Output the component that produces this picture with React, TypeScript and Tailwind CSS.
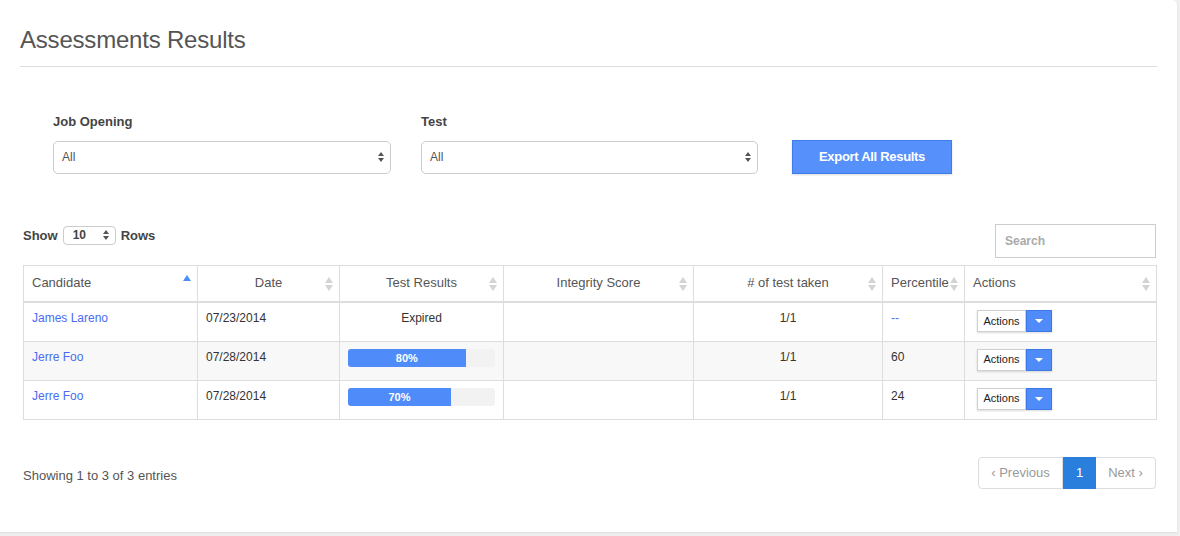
import React from "react";

type Row = {
	name: string;
	date: string;
	result: number | null;
	taken: string;
	percentile: string;
};

const rows: Row[] = [
	{ name: "James Lareno", date: "07/23/2014", result: null, taken: "1/1", percentile: "--" },
	{ name: "Jerre Foo", date: "07/28/2014", result: 80, taken: "1/1", percentile: "60" },
	{ name: "Jerre Foo", date: "07/28/2014", result: 70, taken: "1/1", percentile: "24" },
];

function SortIcon({ active }: { active?: boolean }) {
	if (active) {
		return (
			<svg width="8" height="14" viewBox="0 0 8 14" className="absolute right-[6px] top-[9px]">
				<path d="M4 0 L8 6 L0 6 Z" fill="#4b8ef8" />
			</svg>
		);
	}
	return (
		<svg width="8" height="14" viewBox="0 0 8 14" className="absolute right-[6px] top-[11px]">
			<path d="M4 0 L8 6 L0 6 Z" fill="#d4d4d4" />
			<path d="M0 8 L8 8 L4 14 Z" fill="#d4d4d4" />
		</svg>
	);
}

function UpDown() {
	return (
		<svg width="6" height="10" viewBox="0 0 6 10" className="shrink-0">
			<path d="M3 0 L6 4 L0 4 Z" fill="#555" />
			<path d="M0 6 L6 6 L3 10 Z" fill="#555" />
		</svg>
	);
}

function Select({ width }: { width: string }) {
	return (
		<div
			className={`${width} h-[33px] border border-[#cccccc] rounded-[5px] bg-white flex items-center justify-between pl-[8px] pr-[6px] text-[12px] text-[#555]`}
		>
			<span>All</span>
			<UpDown />
		</div>
	);
}

function Progress({ value }: { value: number }) {
	return (
		<div className="w-[147px] h-[18px] bg-[#f2f2f2] rounded-[3px] overflow-hidden">
			<div
				className="h-full bg-[#4f8cf9] text-white text-[11px] font-bold leading-[18px] text-center"
				style={{ width: `${value}%` }}
			>
				{value}%
			</div>
		</div>
	);
}

function ActionsButton() {
	return (
		<div className="inline-flex h-[22px] shadow-[0_1px_2px_rgba(0,0,0,0.15)]">
			<div className="w-[49px] border border-[#cfcfcf] bg-white text-[11px] text-[#222] flex items-center justify-center">
				Actions
			</div>
			<div className="w-[26px] bg-[#4f8cf9] border border-[#3d78e6] flex items-center justify-center">
				<svg width="8" height="4" viewBox="0 0 8 4">
					<path d="M0 0 L8 0 L4 4 Z" fill="#fff" />
				</svg>
			</div>
		</div>
	);
}

export default function App() {
	const th = "relative border border-[#dddddd] border-b-2 h-[37px] px-[8px] pb-[1px] font-normal text-[13px] text-[#555]";
	const td = "border border-[#dddddd] align-top px-[8px] pt-[7px] text-[12px] leading-[17px] text-[#333]";

	return (
		<div
			className="w-[1180px] h-[536px] bg-[#efefef] overflow-hidden"
			style={{ fontFamily: '"Liberation Sans", Arial, sans-serif' }}
		>
			<div className="w-[1177px] h-[532px] bg-white rounded-tr-[5px] shadow-[0_1px_2px_rgba(0,0,0,0.08)] px-[20px] pt-[27px]">
				<h1 className="text-[24px] leading-[26px] text-[#555] font-light tracking-[-0.2px]">Assessments Results</h1>
				<div className="mt-[13px] h-px bg-[#dddddd]" />

				{/* filters */}
				<div className="flex items-end pl-[33px] mt-[45px]">
					<div className="flex flex-col">
						<label className="text-[13px] font-bold text-[#444] mb-[9px]">Job Opening</label>
						<Select width="w-[338px]" />
					</div>
					<div className="flex flex-col ml-[30px]">
						<label className="text-[13px] font-bold text-[#444] mb-[9px]">Test</label>
						<Select width="w-[337px]" />
					</div>
					<button className="ml-[34px] w-[160px] h-[34px] bg-[#5590fb] border border-[#3f7ce8] text-white text-[13px] font-bold tracking-[-0.3px] shadow-[0_1px_2px_rgba(0,0,0,0.15)]">
						Export All Results
					</button>
				</div>

				{/* show rows / search */}
				<div className="flex items-start justify-between pl-[3px] pr-[1px] mt-[50px]">
					<div className="flex items-center gap-[5px] mt-[2px] text-[13px] font-bold text-[#444]">
						<span>Show</span>
						<div className="w-[53px] h-[19px] border border-[#cccccc] rounded-[4px] flex items-center justify-between pl-[9px] pr-[6px] text-[12px]">
							<span>10</span>
							<UpDown />
						</div>
						<span>Rows</span>
					</div>
					<div className="w-[161px] h-[34px] border border-[#cccccc] flex items-center pl-[9px] text-[12px] font-bold text-[#aaa]">
						Search
					</div>
				</div>

				{/* table */}
				<table className="mt-[7px] ml-[3px] w-[1133px] border-collapse table-fixed">
					<colgroup>
						<col className="w-[174px]" />
						<col className="w-[142px]" />
						<col className="w-[164px]" />
						<col className="w-[190px]" />
						<col className="w-[189px]" />
						<col className="w-[82px]" />
						<col className="w-[192px]" />
					</colgroup>
					<thead>
						<tr>
							<th className={`${th} text-left`}>
								Candidate
								<SortIcon active />
							</th>
							<th className={`${th} text-center`}>
								Date
								<SortIcon />
							</th>
							<th className={`${th} text-center`}>
								Test Results
								<SortIcon />
							</th>
							<th className={`${th} text-center`}>
								Integrity Score
								<SortIcon />
							</th>
							<th className={`${th} text-center`}>
								# of test taken
								<SortIcon />
							</th>
							<th className={`${th} text-left`}>
								Percentile
								<SortIcon />
							</th>
							<th className={`${th} text-left`}>
								Actions
								<SortIcon />
							</th>
						</tr>
					</thead>
					<tbody>
						{rows.map((row, i) => (
							<tr key={i} className={i === 1 ? "bg-[#f8f8f8] h-[39px]" : "h-[39px]"}>
								<td className={td}>
									<a className="text-[#4a6cf2]" href="#">
										{row.name}
									</a>
								</td>
								<td className={td}>{row.date}</td>
								<td className={`${td} ${row.result === null ? "text-center" : ""}`}>
									{row.result === null ? "Expired" : <Progress value={row.result} />}
								</td>
								<td className={td}></td>
								<td className={`${td} text-center`}>{row.taken}</td>
								<td className={td}>
									{row.percentile === "--" ? (
										<span className="text-[#4a6cf2]">--</span>
									) : (
										row.percentile
									)}
								</td>
								<td className={`${td} pl-[12px]`}>
									<ActionsButton />
								</td>
							</tr>
						))}
					</tbody>
				</table>

				{/* footer */}
				<div className="flex items-center justify-between pl-[3px] pr-[1px] mt-[37px]">
					<span className="text-[13px] text-[#555] mt-[6px]">Showing 1 to 3 of 3 entries</span>
					<div className="flex h-[32px] text-[13px]">
						<div className="w-[85px] border border-[#dddddd] rounded-l-[4px] flex items-center justify-center text-[#999]">
							‹ Previous
						</div>
						<div className="w-[33px] bg-[#2a7fdc] text-white flex items-center justify-center">1</div>
						<div className="w-[60px] border border-[#dddddd] border-l-0 rounded-r-[4px] flex items-center justify-center text-[#999]">
							Next ›
						</div>
					</div>
				</div>
			</div>
		</div>
	);
}
